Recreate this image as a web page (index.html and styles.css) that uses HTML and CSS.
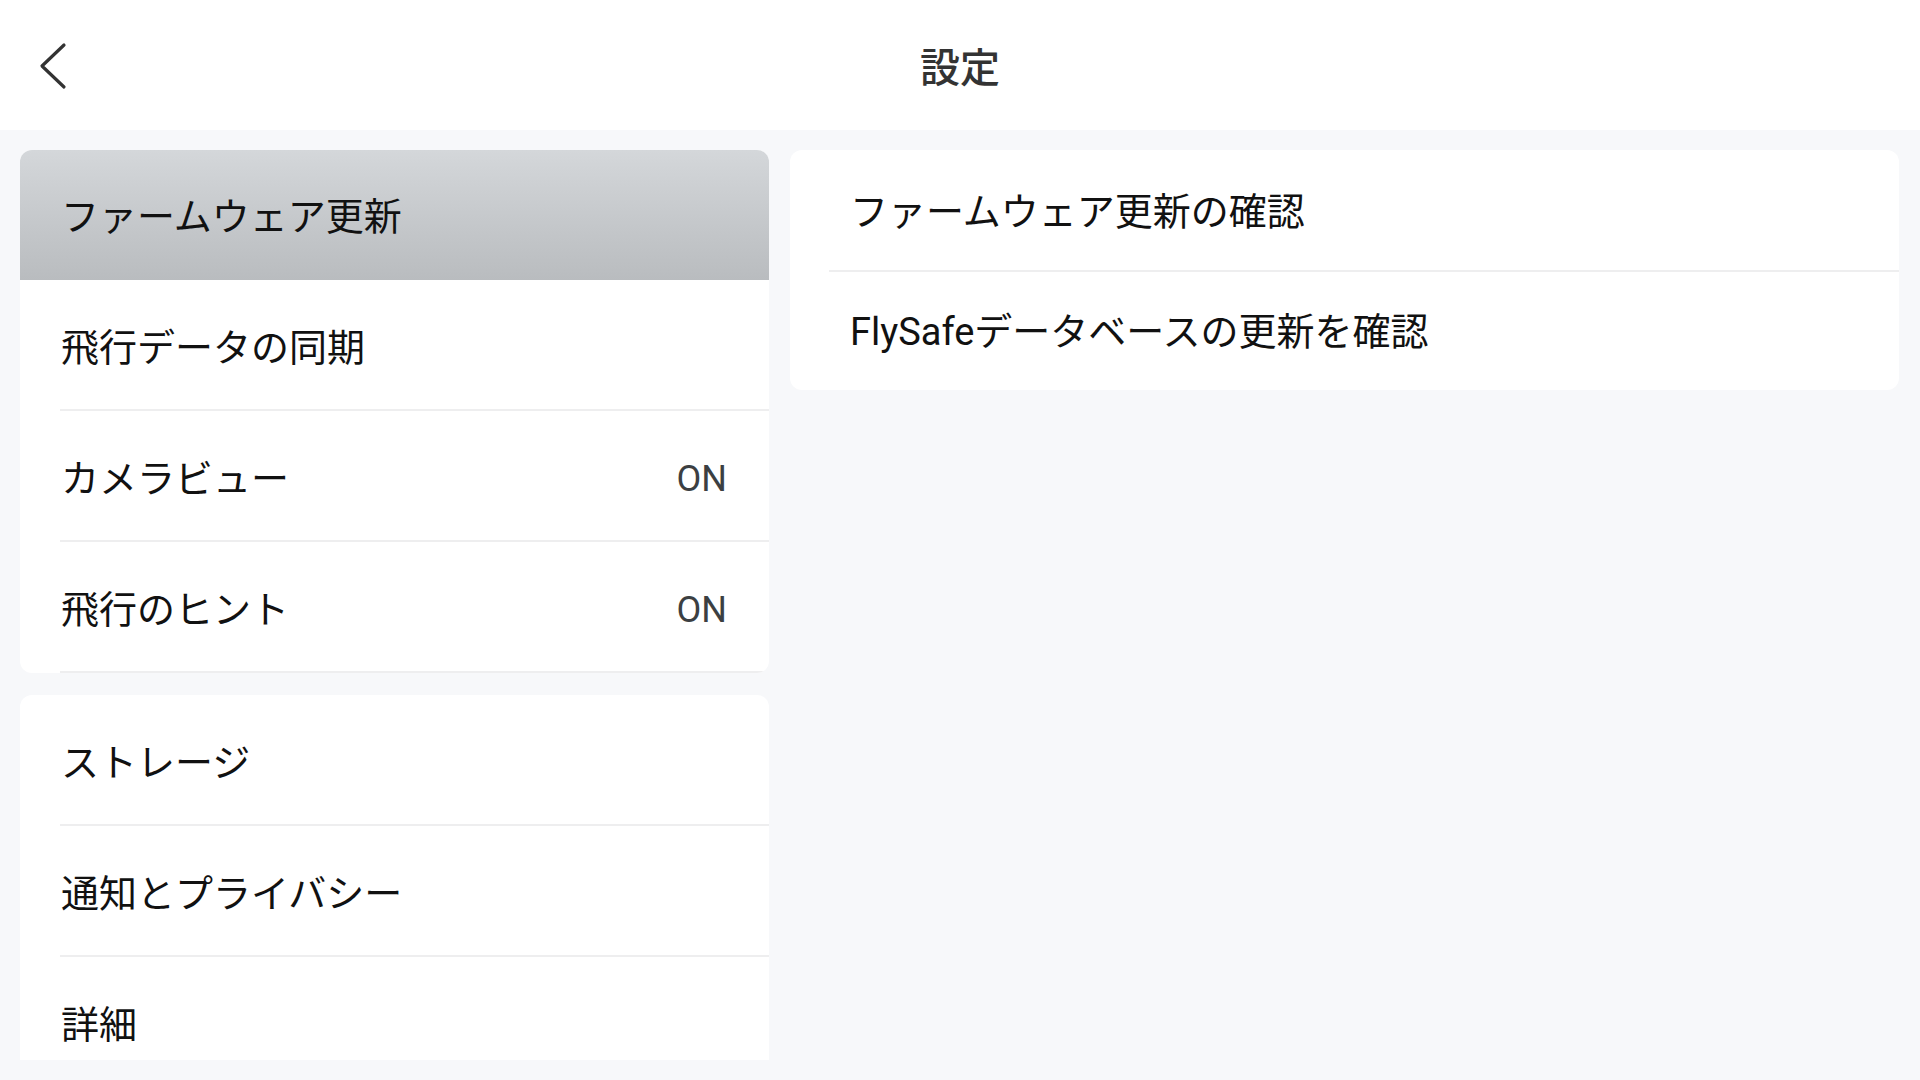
FILE: index.html
```html
<!DOCTYPE html>
<html lang="ja">
<head>
  <meta charset="UTF-8">
  <meta name="viewport" content="width=device-width, initial-scale=1.0">
  <title>設定</title>
  <link rel="stylesheet" href="styles.css">
</head>
<body>
  <header class="topbar">
    <button class="back" aria-label="戻る">
      <svg width="34" height="52" viewBox="0 0 34 52">
        <polyline points="26,5 4,26 26,47" fill="none" stroke="#333" stroke-width="3.2" stroke-linecap="round" stroke-linejoin="round"/>
      </svg>
    </button>
    <h1 class="title">設定</h1>
  </header>

  <main class="content">
    <div class="menu">
      <ul class="panel">
        <li class="item active">ファームウェア更新</li>
        <li class="item">飛行データの同期</li>
        <li class="item">カメラビュー<span class="value">ON</span></li>
        <li class="item">飛行のヒント<span class="value">ON</span></li>
      </ul>
      <ul class="panel panel-rest">
        <li class="item">ストレージ</li>
        <li class="item">通知とプライバシー</li>
        <li class="item">詳細</li>
      </ul>
    </div>

    <section class="detail">
      <ul class="panel">
        <li class="row">ファームウェア更新の確認</li>
        <li class="row">FlySafeデータベースの更新を確認</li>
      </ul>
    </section>
  </main>
</body>
</html>
```

FILE: styles.css
```css
/* Base */
* {
  box-sizing: border-box;
}

body {
  margin: 0;
  width: 1920px;
  height: 1080px;
  overflow: hidden;
  background-color: #f7f8fa;
  font-family: Roboto, "Noto Sans CJK JP", sans-serif;
  color: #111;
  display: flex;
  flex-direction: column;
}

ul {
  list-style: none;
  margin: 0;
  padding: 0;
}

/* Top bar */
.topbar {
  height: 130px;
  flex-shrink: 0;
  background-color: #fff;
  display: flex;
  align-items: center;
  justify-content: center;
  position: relative;
}

.back {
  position: absolute;
  left: 38px;
  top: 40px;
  background: none;
  border: none;
  padding: 0;
  cursor: pointer;
}

.title {
  margin: 0;
  font-family: "Noto Sans CJK JP", sans-serif;
  font-size: 40px;
  font-weight: 500;
  color: #333;
}

/* Content */
.content {
  flex: 1;
  min-height: 0;
  display: flex;
  gap: 21px;
  padding: 20px 21px 20px 20px;
}

.menu {
  width: 749px;
  display: flex;
  flex-direction: column;
  gap: 22px;
}

.panel {
  background-color: #fff;
  border-radius: 12px;
  overflow: hidden;
}

.panel-rest {
  flex: 1;
  min-height: 0;
  border-radius: 12px 12px 0 0;
}

.item {
  height: 131px;
  padding: 0 42px 3px 41px;
  display: flex;
  align-items: center;
  justify-content: space-between;
  font-size: 38px;
  position: relative;
}

.item::after {
  content: "";
  position: absolute;
  left: 40px;
  right: 0;
  bottom: 0;
  height: 2px;
  background-color: #eeeeef;
}

.item.active {
  height: 130px;
  background: linear-gradient(#d4d7da, #b9bcbf);
}

.item.active::after {
  display: none;
}

.value {
  font-size: 36px;
  color: #3c3f42;
  padding-top: 8px;
}

/* Right side */
.detail {
  flex: 1;
}

.row {
  height: 120px;
  padding: 0 0 3px 60px;
  display: flex;
  align-items: center;
  font-size: 38px;
  position: relative;
}

.row + .row::before {
  content: "";
  position: absolute;
  left: 39px;
  right: 0;
  top: 0;
  height: 2px;
  background-color: #eeeeef;
}
```
